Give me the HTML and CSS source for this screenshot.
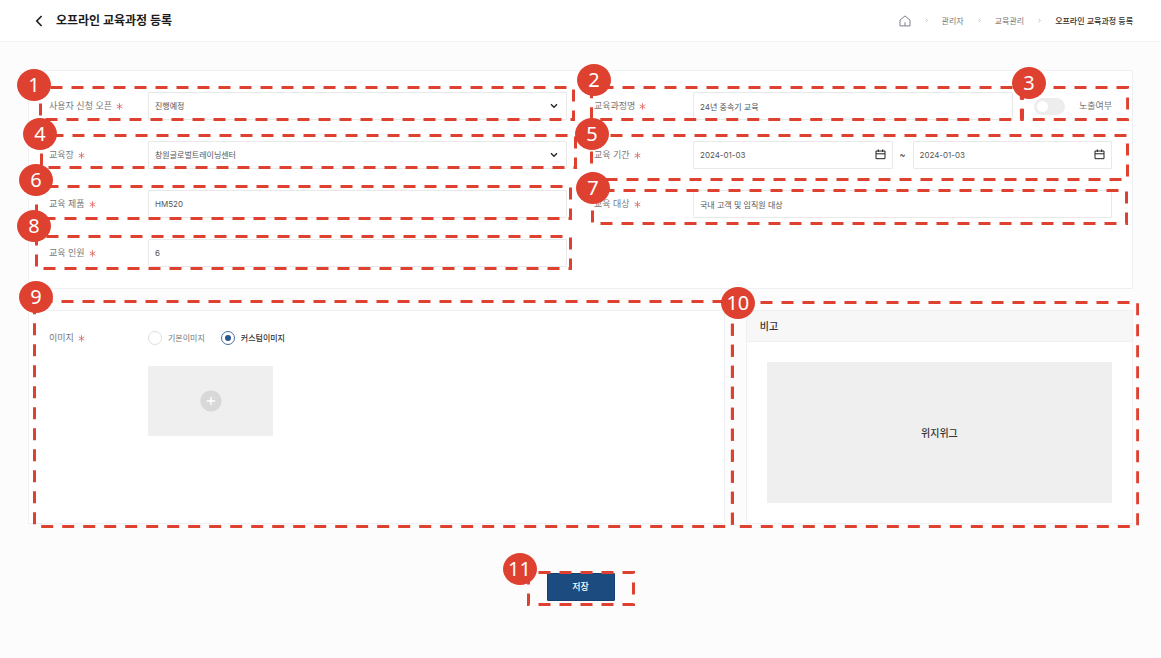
FILE: index.html
```html
<!DOCTYPE html>
<html lang="ko">
<head>
<meta charset="utf-8">
<meta name="viewport" content="width=device-width, initial-scale=1">
<title>오프라인 교육과정 등록</title>
<link rel="stylesheet" href="styles.css">
</head>
<body>
<svg class="defs" aria-hidden="true">
  <symbol id="star" viewBox="0 0 6 6"><path d="M3 0.2V5.8M0.6 1.6L5.4 4.4M5.4 1.6L0.6 4.4" stroke="currentColor" stroke-width="0.7" fill="none"/></symbol>
  <symbol id="down" viewBox="0 0 8 6"><path d="M1 1.2L4 4.3L7 1.2" stroke="currentColor" stroke-width="1.3" fill="none"/></symbol>
  <symbol id="sep" viewBox="0 0 3 5"><path d="M0.6 0.7L2.3 2.5L0.6 4.3" stroke="currentColor" stroke-width="0.7" fill="none"/></symbol>
  <symbol id="calendar" viewBox="0 0 11 11"><path d="M1 2H10V9.7H1ZM1 4.8H10M3.3 0.4V3M7.7 0.4V3" stroke="currentColor" stroke-width="1" fill="none"/></symbol>
</svg>

<header class="topbar">
  <button class="back" type="button" aria-label="뒤로">
    <svg width="8" height="12" viewBox="0 0 8 12"><path d="M6.6 1L1.8 6L6.6 11" stroke="currentColor" stroke-width="1.7" fill="none"/></svg>
  </button>
  <h1 class="title">오프라인 교육과정 등록</h1>
  <nav class="crumbs" aria-label="현재 위치">
    <a class="crumb" href="#" aria-label="홈"><svg class="home" width="12" height="12" viewBox="0 0 12 12"><path d="M1 5.1L6 0.9L11 5.1V10.9H1ZM6 7.2V10.9" stroke="currentColor" stroke-width="1" stroke-linejoin="round" fill="none"/></svg></a>
    <svg class="sep"><use href="#sep"/></svg>
    <a class="crumb" href="#">관리자</a>
    <svg class="sep"><use href="#sep"/></svg>
    <a class="crumb" href="#">교육관리</a>
    <svg class="sep"><use href="#sep"/></svg>
    <a class="crumb current" href="#" aria-current="page">오프라인 교육과정 등록</a>
  </nav>
</header>

<main>
<form class="page">
  <section class="card fields">
    <div class="field">
      <label class="label" for="open">사용자 신청 오픈 <svg class="star"><use href="#star"/></svg></label>
      <div class="control">
        <select id="open" class="box"><option>진행예정</option></select>
        <svg class="down"><use href="#down"/></svg>
      </div>
      <div class="callout c1"><svg class="frame"><rect/></svg><span class="badge">1</span></div>
    </div>

    <div class="split">
      <div class="field">
        <label class="label" for="name">교육과정명 <svg class="star"><use href="#star"/></svg></label>
        <div class="control"><input id="name" class="box" type="text" value="24년 중속기 교육"></div>
        <div class="callout c2"><svg class="frame"><rect/></svg><span class="badge">2</span></div>
      </div>
      <div class="field visibility">
        <input id="visible" class="switch" type="checkbox" role="switch">
        <label for="visible">노출여부</label>
        <div class="callout c3"><svg class="frame"><rect/></svg><span class="badge">3</span></div>
      </div>
    </div>

    <div class="field">
      <label class="label" for="place">교육장 <svg class="star"><use href="#star"/></svg></label>
      <div class="control">
        <select id="place" class="box"><option>창원글로벌트레이닝센터</option></select>
        <svg class="down"><use href="#down"/></svg>
      </div>
      <div class="callout c4"><svg class="frame"><rect/></svg><span class="badge">4</span></div>
    </div>

    <div class="field">
      <label class="label" for="from">교육 기간 <svg class="star"><use href="#star"/></svg></label>
      <div class="range">
        <div class="control">
          <input id="from" class="box" type="text" value="2024-01-03">
          <svg class="calendar"><use href="#calendar"/></svg>
        </div>
        <span class="tilde">~</span>
        <div class="control">
          <input class="box" type="text" value="2024-01-03" aria-label="교육 기간 종료일">
          <svg class="calendar"><use href="#calendar"/></svg>
        </div>
      </div>
      <div class="callout c5"><svg class="frame"><rect/></svg><span class="badge">5</span></div>
    </div>

    <div class="field">
      <label class="label" for="product">교육 제품 <svg class="star"><use href="#star"/></svg></label>
      <div class="control"><input id="product" class="box" type="text" value="HM520"></div>
      <div class="callout c6"><svg class="frame"><rect/></svg><span class="badge">6</span></div>
    </div>

    <div class="field">
      <label class="label" for="target">교육 대상 <svg class="star"><use href="#star"/></svg></label>
      <div class="control"><input id="target" class="box" type="text" value="국내 고객 및 임직원 대상"></div>
      <div class="callout c7"><svg class="frame"><rect/></svg><span class="badge">7</span></div>
    </div>

    <div class="field">
      <label class="label" for="people">교육 인원 <svg class="star"><use href="#star"/></svg></label>
      <div class="control"><input id="people" class="box" type="text" value="6"></div>
      <div class="callout c8"><svg class="frame"><rect/></svg><span class="badge">8</span></div>
    </div>
  </section>

  <div class="lower">
    <section class="card image">
      <span class="label" id="image-label">이미지 <svg class="star"><use href="#star"/></svg></span>
      <div class="image-body">
        <div class="radios" role="radiogroup" aria-labelledby="image-label">
          <label class="choice"><input class="radio" type="radio" name="image">기본이미지</label>
          <label class="choice"><input class="radio" type="radio" name="image" checked>커스텀이미지</label>
        </div>
        <button class="upload" type="button" aria-label="이미지 추가">
          <svg width="22" height="22" viewBox="0 0 22 22"><circle cx="11" cy="11" r="10.6" fill="#d8d8d8"/><path d="M11 6.8V15.2M6.8 11H15.2" stroke="#fff" stroke-width="1.3"/></svg>
        </button>
      </div>
      <div class="callout c9"><svg class="frame"><rect/></svg><span class="badge">9</span></div>
    </section>

    <section class="card note">
      <h2 class="note-title">비고</h2>
      <div class="note-body"><div class="editor">위지위그</div></div>
      <div class="callout c10"><svg class="frame"><rect/></svg><span class="badge">10</span></div>
    </section>
  </div>

  <div class="actions">
    <button class="save" type="submit">저장</button>
    <div class="callout c11"><svg class="frame"><rect/></svg><span class="badge">11</span></div>
  </div>
</form>
</main>
</body>
</html>
```
FILE: styles.css
```css
* {
  box-sizing: border-box;
}

body {
  margin: 0;
  background: #fcfcfc;
  color: #333;
  font: 9px/14px Inter, "Noto Sans CJK KR", sans-serif;
}

button,
input,
select {
  margin: 0;
  font: inherit;
  color: inherit;
}

.defs {
  display: none;
}

/* Top bar */

.topbar {
  display: flex;
  align-items: center;
  height: 42px;
  padding: 0 28px 0 35px;
  background: #fff;
  border-bottom: 1px solid #f2f3f4;
}

.back {
  display: flex;
  padding: 0;
  border: 0;
  background: none;
  color: #222;
}

.title {
  margin: 0 auto 0 13px;
  color: #1c1c1c;
  font-size: 12px;
  line-height: 16px;
  font-weight: 700;
}

.crumbs {
  display: flex;
  align-items: center;
  gap: 14px;
  font-size: 8px;
}

.crumb {
  display: flex;
  color: #777;
  text-decoration: none;
}

.current {
  color: #333;
  font-weight: 500;
}

.home {
  color: #7c8087;
}

.sep {
  width: 3px;
  height: 5px;
  color: #aaa;
}

/* Page and cards */

.page {
  display: flex;
  flex-direction: column;
  gap: 21px;
  padding: 28px;
}

.card {
  position: relative;
  background: #fff;
  border: 1px solid #eff0f4;
}

.fields {
  display: grid;
  grid-template-columns: 1fr 1fr;
  gap: 21px 27px;
  padding: 21px 20px;
}

.field {
  position: relative;
  display: flex;
  flex: 1;
  align-items: center;
  height: 28px;
}

.split {
  display: flex;
  gap: 21px;
}

.label {
  display: flex;
  flex: none;
  align-items: center;
  gap: 4px;
  width: 99px;
  color: #777;
}

.star {
  width: 7px;
  height: 7px;
  color: #dc655d;
}

.control {
  position: relative;
  flex: 1;
  min-width: 0;
}

.box {
  display: block;
  width: 100%;
  height: 28px;
  padding: 0 6px;
  border: 1px solid #e9e9e9;
  border-radius: 1px;
  background: #fff;
  color: #555;
  font-size: 8px;
  appearance: none;
}

.down,
.calendar {
  position: absolute;
  pointer-events: none;
  color: #222;
}

.down {
  top: 11px;
  right: 9px;
  width: 8px;
  height: 6px;
}

.calendar {
  top: 8px;
  right: 7px;
  width: 11px;
  height: 11px;
}

.range {
  display: flex;
  flex: 1;
  align-items: center;
}

.tilde {
  width: 20px;
  text-align: center;
}

.visibility {
  flex: none;
  gap: 14px;
  color: #777;
}

.switch {
  width: 31px;
  height: 17px;
  padding: 3px;
  border-radius: 9px;
  background: #ededed;
  appearance: none;
}

.switch::before {
  content: "";
  display: block;
  width: 11px;
  height: 11px;
  border-radius: 50%;
  background: #fff;
}

.switch:checked {
  padding-left: 17px;
  background: #1c4b80;
}

/* Image and note cards */

.lower {
  display: grid;
  grid-template-columns: 9fr 5fr;
  gap: 21px;
}

.image {
  display: flex;
  align-items: flex-start;
  padding: 20px;
}

.image-body {
  display: flex;
  flex-direction: column;
  align-items: flex-start;
  gap: 21px;
}

.radios {
  display: flex;
  gap: 16px;
  font-size: 8px;
}

.choice {
  display: flex;
  align-items: center;
  gap: 6px;
  color: #777;
}

.choice:has(:checked) {
  color: #333;
  font-weight: 500;
}

.radio {
  display: grid;
  place-items: center;
  width: 14px;
  height: 14px;
  border: 1px solid #dedede;
  border-radius: 50%;
  background: #fff;
  appearance: none;
}

.radio:checked {
  border-color: #4a6c9c;
}

.radio:checked::before {
  content: "";
  width: 6px;
  height: 6px;
  border-radius: 50%;
  background: #2c5590;
}

.upload {
  display: grid;
  place-items: center;
  width: 125px;
  height: 70px;
  padding: 0;
  border: 0;
  background: #efefef;
}

.note-title {
  margin: 0;
  padding: 8px 13px;
  background: #f7f7f8;
  border-bottom: 1px solid #eff0f4;
  font-size: 10px;
  font-weight: 500;
}

.note-body {
  padding: 20px;
}

.editor {
  display: grid;
  place-items: center;
  height: 141px;
  background: #efefef;
  font-size: 10px;
  font-weight: 500;
}

.actions {
  position: relative;
  align-self: center;
  margin-top: 28px;
}

.save {
  display: block;
  width: 68px;
  height: 28px;
  padding: 0;
  border: 1px solid #17406f;
  border-radius: 1px;
  background: #1c4b80;
  color: #fff;
  font-weight: 500;
}

/* Numbered callouts drawn over the form */

.callout {
  position: absolute;
  pointer-events: none;
}

.frame {
  position: absolute;
  z-index: 1;
  width: 100%;
  height: 100%;
}

.frame rect {
  x: 1.5px;
  y: 1.5px;
  width: calc(100% - 3px);
  height: calc(100% - 3px);
  fill: none;
  stroke: #de412f;
  stroke-width: 3px;
  stroke-dasharray: 12 9;
  stroke-dashoffset: -10px;
}

.badge {
  position: absolute;
  z-index: 2;
  width: 34px;
  height: 32px;
  border-radius: 50%;
  background: #de412f;
  color: #fff;
  font: 20px/32px "Noto Sans", sans-serif;
  text-align: center;
}

.c1 { inset: -6px -8px -1px -10px; }
.c1 .badge { left: -22px; top: -17px; }

.c2 { inset: -6px -10px -1px -4px; }
.c2 .badge { left: -13px; top: -22px; }

.c3 { inset: -6px -17px -1px -13px; }
.c3 .badge { left: -9px; top: -19px; }

.c4 { inset: -7px -10px 0 -9px; }
.c4 .badge { left: -17px; top: -16px; }

.c5 { inset: -7px -17px -12px -4px; }
.c5 .badge { left: -15px; top: -16px; }
.c5 rect { stroke-dashoffset: -19px; }

.c6 { inset: -5px -5px -2px -14px; }
.c6 .badge { left: -16px; top: -21px; }

.c7 { inset: -1px -16px -7px -3px; }
.c7 .badge { left: -15px; top: -17px; }

.c8 { inset: -4px -5px -3px -14px; }
.c8 .badge { left: -18px; top: -25px; }

.c9 { inset: -11px -10px -5px 4px; }
.c9 .badge { left: -14px; top: -19px; }
.c9 rect { stroke-dashoffset: -6px; }

.c10 { inset: -10px -7px -5px -16px; }
.c10 .badge { left: -10px; top: -14px; }
.c10 rect { stroke-dashoffset: -7px; }

.c11 { inset: -2px -20px -5px -20px; }
.c11 .badge { left: -24px; top: -18px; }
```
